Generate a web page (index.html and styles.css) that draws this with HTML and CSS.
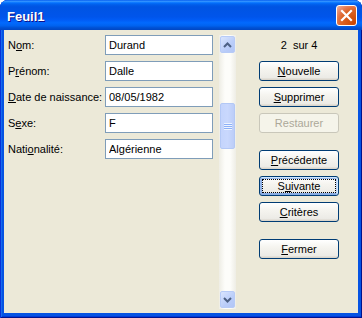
FILE: index.html
```html
<!DOCTYPE html>
<html>
    <head>
        <meta charset="utf-8">
        <title>Feuil1</title>
        <link rel="stylesheet" href="styles.css">
    </head>
    <body>
    <div class="window">
        <div class="titlebar">
            <span class="title">Feuil1</span>
            <button class="close">
                <svg width="13" height="13" viewBox="0 0 13 13">
                    <path d="M2 2 L11 11 M11 2 L2 11" stroke="#fff" stroke-width="2.2" stroke-linecap="square"/>
                </svg>
            </button>
        </div>
        <div class="client">
            <div class="fields">
                <div class="row"><label>N<u>o</u>m:</label><input type="text" value="Durand"></div>
                <div class="row"><label>P<u>r</u>énom:</label><input type="text" value="Dalle"></div>
                <div class="row"><label><u>D</u>ate de naissance:</label><input type="text" value="08/05/1982"></div>
                <div class="row"><label>S<u>e</u>xe:</label><input type="text" value="F"></div>
                <div class="row"><label>Nati<u>o</u>nalité:</label><input type="text" value="Algérienne"></div>
            </div>
            <div class="scrollbar">
                <div class="arrow">
                    <svg width="9" height="6" viewBox="0 0 9 6"><path d="M1 5 L4.5 1.5 L8 5" fill="none" stroke="#4d6185" stroke-width="2"/></svg>
                </div>
                <div class="track">
                    <div class="spacer"></div>
                    <div class="thumb"><div class="grip"></div></div>
                </div>
                <div class="arrow">
                    <svg width="9" height="6" viewBox="0 0 9 6"><path d="M1 1 L4.5 4.5 L8 1" fill="none" stroke="#4d6185" stroke-width="2"/></svg>
                </div>
            </div>
            <div class="actions">
                <div class="counter">2  sur 4</div>
                <button class="btn"><u>N</u>ouvelle</button>
                <button class="btn"><u>S</u>upprimer</button>
                <button class="btn" disabled>Restaurer</button>
                <button class="btn group"><u>P</u>récédente</button>
                <button class="btn focused">S<u>u</u>ivante</button>
                <button class="btn"><u>C</u>ritères</button>
                <button class="btn group"><u>F</u>ermer</button>
            </div>
        </div>
    </div>
    </body>
</html>
```

FILE: styles.css
```css
body{
    margin: 0;
    background: #fff;
    font-family: "Liberation Sans", Arial, sans-serif;
    font-size: 11px;
}
.window{
    width: 362px;
    height: 318px;
    box-sizing: border-box;
    display: flex;
    flex-direction: column;
    background: #0553e3;
    border-radius: 8px 8px 0 0;
    box-shadow: inset 1px 0 #0831d9, inset -1px 0 #00138c, inset 0 -1px #00138c, inset 2px 0 #166aee, inset 0 -2px #003bda;
}
.titlebar{
    height: 30px;
    box-sizing: border-box;
    padding: 3px 5px 0 7px;
    display: flex;
    align-items: center;
    justify-content: space-between;
    border-radius: 8px 8px 0 0;
    background: linear-gradient(#0058ee 0%, #3593ff 4%, #288eff 6%, #127dff 8%, #036ffc 10%, #0262ee 14%, #0057e5 20%, #0054e3 24%, #0055eb 56%, #005bf5 66%, #026afe 76%, #0062ef 86%, #0052d6 92%, #0046c3 100%);
}
.title{
    color: #fff;
    font-weight: bold;
    font-size: 13px;
    text-shadow: 1px 1px #0f1089;
}
.close{
    width: 21px;
    height: 21px;
    margin-top: -3px;
    padding: 0;
    border: 1px solid #fff;
    border-radius: 3px;
    background: radial-gradient(circle at 90% 90%, #cc4600 0%, #dc6527 55%, #e4774c 70%, #eb9e86 90%, #f0b9a4 100%);
    display: flex;
    align-items: center;
    justify-content: center;
}
.client{
    flex: 1;
    margin: 0 4px 5px 4px;
    background: #ece9d8;
    display: flex;
    padding: 5px 0 4px 4px;
}
.fields{
    display: flex;
    flex-direction: column;
    gap: 6px;
}
.row{
    display: flex;
    align-items: center;
    height: 20px;
}
.row label{
    width: 97px;
}
.row input{
    width: 108px;
    height: 20px;
    box-sizing: border-box;
    margin: 0;
    padding: 0 3px;
    border: 1px solid #7f9db9;
    background: #fff;
    font-family: "Liberation Sans", Arial, sans-serif;
    font-size: 11px;
    color: #000;
    outline: none;
}
.scrollbar{
    width: 17px;
    margin-left: 6px;
    display: flex;
    flex-direction: column;
    background: linear-gradient(90deg, #eeede5, #fdfdfa 35%, #fdfdfa 65%, #eeede5);
}
.arrow{
    height: 15px;
    margin: 1px;
    border: 1px solid #b7cbf7;
    border-radius: 2px;
    background: linear-gradient(135deg, #d9e5fe, #bacdf9 60%, #b2c6f6);
    display: flex;
    align-items: center;
    justify-content: center;
}
.track{
    flex: 1;
    display: flex;
    flex-direction: column;
}
.spacer{
    height: 49px;
}
.thumb{
    height: 44px;
    margin: 0 1px;
    border: 1px solid #b3c8f5;
    border-radius: 2px;
    background: linear-gradient(90deg, #c4d4fc, #c9d8fd 50%, #bccdf8);
    display: flex;
    align-items: center;
    justify-content: center;
}
.grip{
    width: 8px;
    height: 7px;
    background: repeating-linear-gradient(#eef4fe 0 1px, #8cb0f8 1px 2px);
}
.actions{
    width: 80px;
    margin-left: 23px;
    display: flex;
    flex-direction: column;
    gap: 6px;
}
.counter{
    height: 20px;
    line-height: 20px;
    text-align: center;
    white-space: pre;
}
.btn{
    height: 20px;
    margin: 0;
    padding: 0;
    border: 1px solid #003c74;
    border-radius: 3px;
    background: linear-gradient(#fff, #f5f4ef 40%, #ecebe6 86%, #d6d0c5);
    font-family: "Liberation Sans", Arial, sans-serif;
    font-size: 11px;
    color: #000;
}
.btn:disabled{
    border-color: #c9c7ba;
    background: #f5f4ea;
    color: #aca899;
}
.group{
    margin-top: 11px;
}
.focused{
    box-shadow: inset -1px 1px #cee7ff, inset 1px 2px #98b8ea, inset -2px 2px #bcd4f6, inset 1px -1px #89ade4, inset 2px -2px #89ade4;
    outline: 1px dotted #000;
    outline-offset: -4px;
}
```
